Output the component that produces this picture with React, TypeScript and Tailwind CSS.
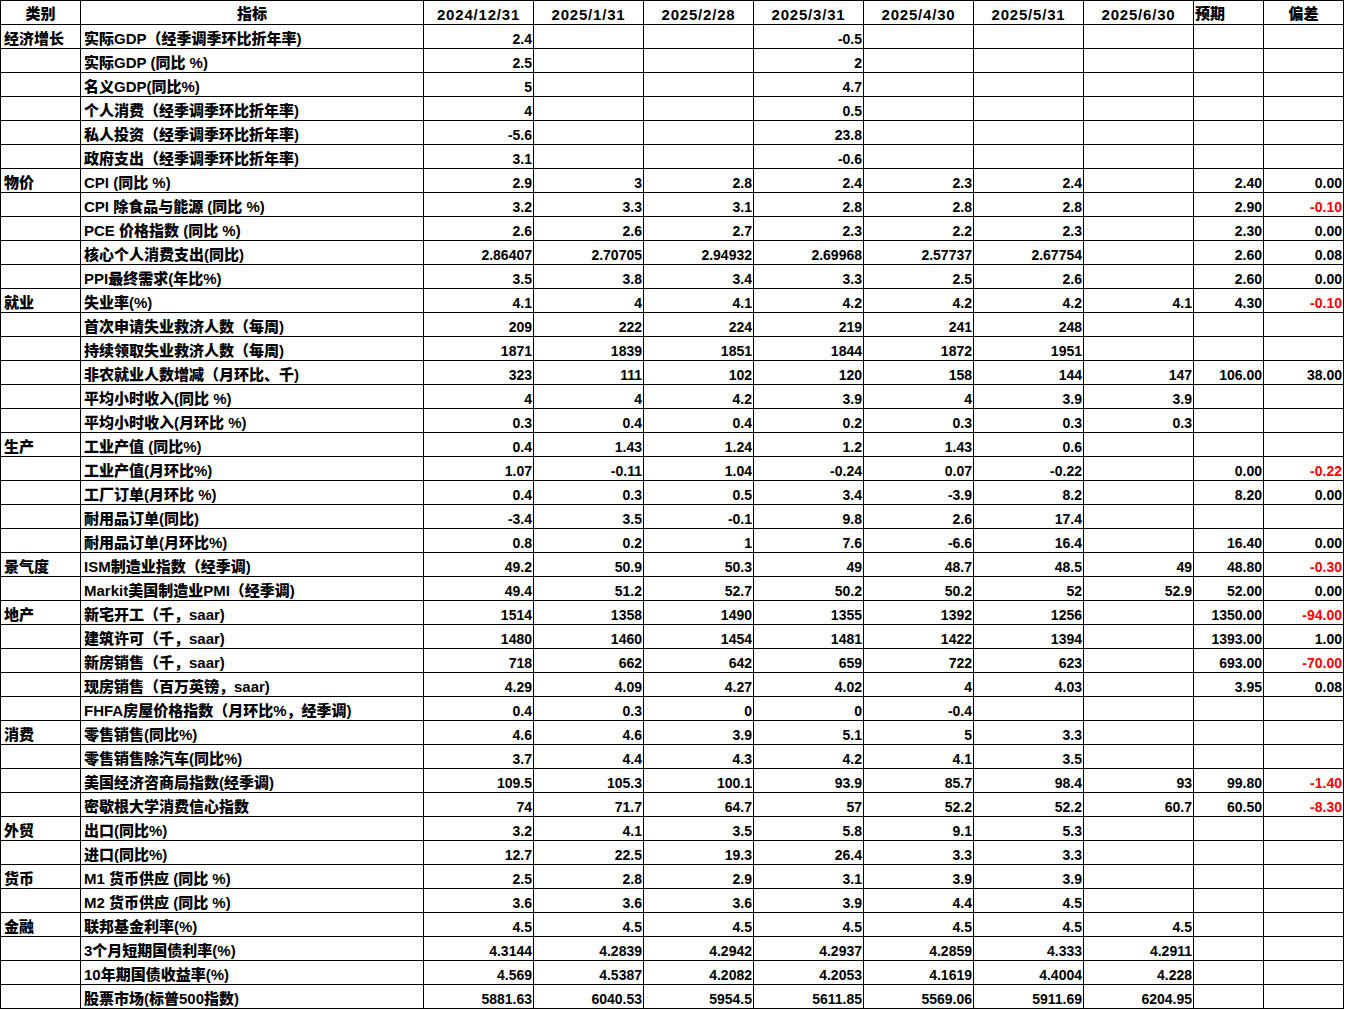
type Row = {
  cat?: string
  name: string
  v: string[]
  fc?: string
  dev?: string
}

const rows: Row[] = [
  { cat: '经济增长', name: '实际GDP（经季调季环比折年率)', v: ['2.4', '', '', '-0.5'] },
  { name: '实际GDP (同比 %)', v: ['2.5', '', '', '2'] },
  { name: '名义GDP(同比%)', v: ['5', '', '', '4.7'] },
  { name: '个人消费（经季调季环比折年率)', v: ['4', '', '', '0.5'] },
  { name: '私人投资（经季调季环比折年率)', v: ['-5.6', '', '', '23.8'] },
  { name: '政府支出（经季调季环比折年率)', v: ['3.1', '', '', '-0.6'] },
  { cat: '物价', name: 'CPI (同比 %)', v: ['2.9', '3', '2.8', '2.4', '2.3', '2.4', ''], fc: '2.40', dev: '0.00' },
  { name: 'CPI 除食品与能源 (同比 %)', v: ['3.2', '3.3', '3.1', '2.8', '2.8', '2.8', ''], fc: '2.90', dev: '-0.10' },
  { name: 'PCE 价格指数 (同比 %)', v: ['2.6', '2.6', '2.7', '2.3', '2.2', '2.3', ''], fc: '2.30', dev: '0.00' },
  { name: '核心个人消费支出(同比)', v: ['2.86407', '2.70705', '2.94932', '2.69968', '2.57737', '2.67754', ''], fc: '2.60', dev: '0.08' },
  { name: 'PPI最终需求(年比%)', v: ['3.5', '3.8', '3.4', '3.3', '2.5', '2.6', ''], fc: '2.60', dev: '0.00' },
  { cat: '就业', name: '失业率(%)', v: ['4.1', '4', '4.1', '4.2', '4.2', '4.2', '4.1'], fc: '4.30', dev: '-0.10' },
  { name: '首次申请失业救济人数（每周)', v: ['209', '222', '224', '219', '241', '248'] },
  { name: '持续领取失业救济人数（每周)', v: ['1871', '1839', '1851', '1844', '1872', '1951'] },
  { name: '非农就业人数增减（月环比、千)', v: ['323', '111', '102', '120', '158', '144', '147'], fc: '106.00', dev: '38.00' },
  { name: '平均小时收入(同比 %)', v: ['4', '4', '4.2', '3.9', '4', '3.9', '3.9'] },
  { name: '平均小时收入(月环比 %)', v: ['0.3', '0.4', '0.4', '0.2', '0.3', '0.3', '0.3'] },
  { cat: '生产', name: '工业产值 (同比%)', v: ['0.4', '1.43', '1.24', '1.2', '1.43', '0.6'] },
  { name: '工业产值(月环比%)', v: ['1.07', '-0.11', '1.04', '-0.24', '0.07', '-0.22', ''], fc: '0.00', dev: '-0.22' },
  { name: '工厂订单(月环比 %)', v: ['0.4', '0.3', '0.5', '3.4', '-3.9', '8.2', ''], fc: '8.20', dev: '0.00' },
  { name: '耐用品订单(同比)', v: ['-3.4', '3.5', '-0.1', '9.8', '2.6', '17.4'] },
  { name: '耐用品订单(月环比%)', v: ['0.8', '0.2', '1', '7.6', '-6.6', '16.4', ''], fc: '16.40', dev: '0.00' },
  { cat: '景气度', name: 'ISM制造业指数（经季调)', v: ['49.2', '50.9', '50.3', '49', '48.7', '48.5', '49'], fc: '48.80', dev: '-0.30' },
  { name: 'Markit美国制造业PMI（经季调)', v: ['49.4', '51.2', '52.7', '50.2', '50.2', '52', '52.9'], fc: '52.00', dev: '0.00' },
  { cat: '地产', name: '新宅开工（千，saar)', v: ['1514', '1358', '1490', '1355', '1392', '1256', ''], fc: '1350.00', dev: '-94.00' },
  { name: '建筑许可（千，saar)', v: ['1480', '1460', '1454', '1481', '1422', '1394', ''], fc: '1393.00', dev: '1.00' },
  { name: '新房销售（千，saar)', v: ['718', '662', '642', '659', '722', '623', ''], fc: '693.00', dev: '-70.00' },
  { name: '现房销售（百万英镑，saar)', v: ['4.29', '4.09', '4.27', '4.02', '4', '4.03', ''], fc: '3.95', dev: '0.08' },
  { name: 'FHFA房屋价格指数（月环比%，经季调)', v: ['0.4', '0.3', '0', '0', '-0.4'] },
  { cat: '消费', name: '零售销售(同比%)', v: ['4.6', '4.6', '3.9', '5.1', '5', '3.3'] },
  { name: '零售销售除汽车(同比%)', v: ['3.7', '4.4', '4.3', '4.2', '4.1', '3.5'] },
  { name: '美国经济咨商局指数(经季调)', v: ['109.5', '105.3', '100.1', '93.9', '85.7', '98.4', '93'], fc: '99.80', dev: '-1.40' },
  { name: '密歇根大学消费信心指数', v: ['74', '71.7', '64.7', '57', '52.2', '52.2', '60.7'], fc: '60.50', dev: '-8.30' },
  { cat: '外贸', name: '出口(同比%)', v: ['3.2', '4.1', '3.5', '5.8', '9.1', '5.3'] },
  { name: '进口(同比%)', v: ['12.7', '22.5', '19.3', '26.4', '3.3', '3.3'] },
  { cat: '货币', name: 'M1 货币供应 (同比 %)', v: ['2.5', '2.8', '2.9', '3.1', '3.9', '3.9'] },
  { name: 'M2 货币供应 (同比 %)', v: ['3.6', '3.6', '3.6', '3.9', '4.4', '4.5'] },
  { cat: '金融', name: '联邦基金利率(%)', v: ['4.5', '4.5', '4.5', '4.5', '4.5', '4.5', '4.5'] },
  { name: '3个月短期国债利率(%)', v: ['4.3144', '4.2839', '4.2942', '4.2937', '4.2859', '4.333', '4.2911'] },
  { name: '10年期国债收益率(%)', v: ['4.569', '4.5387', '4.2082', '4.2053', '4.1619', '4.4004', '4.228'] },
  { name: '股票市场(标普500指数)', v: ['5881.63', '6040.53', '5954.5', '5611.85', '5569.06', '5911.69', '6204.95'] },
]

const dates = ['2024/12/31', '2025/1/31', '2025/2/28', '2025/3/31', '2025/4/30', '2025/5/31', '2025/6/30']

const grid =
  'grid grid-cols-[80px_343px_110px_110px_110px_110px_110px_110px_110px_70px_80px]'
const cell = 'h-[24px] border-r border-b border-black flex items-end overflow-hidden whitespace-nowrap'

function Num({ value, red }: { value?: string; red?: boolean }) {
  return (
    <div className={`${cell} justify-end pr-[1px] text-[14px] leading-[17px] ${red ? 'text-[#ff0000]' : ''}`}>
      {value}
    </div>
  )
}

export default function App() {
  return (
    <div
      className="w-[1345px] bg-white text-black font-bold"
      style={{ fontFamily: '"Liberation Sans", "Noto Sans CJK SC", sans-serif' }}
    >
      <div className="w-[1344px] border-l border-t border-black">
        <div className={grid}>
          <div className={`${cell} justify-center text-[15px] leading-[20px] font-black`}>类别</div>
          <div className={`${cell} justify-center text-[15px] leading-[20px] font-black`}>指标</div>
          {dates.map((d) => (
            <div key={d} className={`${cell} justify-center text-[15px] leading-[19px] tracking-[0.8px]`}>
              {d}
            </div>
          ))}
          <div className={`${cell} justify-start pl-[1px] text-[15px] leading-[20px] font-black`}>预期</div>
          <div className={`${cell} justify-center text-[15px] leading-[20px] font-black`}>偏差</div>
        </div>
        {rows.map((r, i) => (
          <div key={i} className={grid}>
            <div className={`${cell} pl-[3px] text-[15px] leading-[18px] font-black`}>{r.cat}</div>
            <div className={`${cell} pl-[3px] text-[15px] leading-[18px] font-black`}>{r.name}</div>
            {Array.from({ length: 7 }).map((_, j) => (
              <Num key={j} value={r.v[j]} />
            ))}
            <Num value={r.fc} />
            <Num value={r.dev} red={!!r.dev && r.dev.startsWith('-')} />
          </div>
        ))}
      </div>
    </div>
  )
}
